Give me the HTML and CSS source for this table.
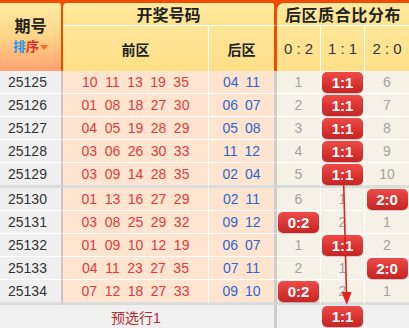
FILE: index.html
```html
<!DOCTYPE html>
<html lang="zh">
<head>
<meta charset="utf-8">
<link rel="stylesheet" href="styles.css">
</head>
<body>
<div class="board">
  <div class="grid">
    <div class="h-qh"><span class="t-qh">期号</span><span class="sort"><b class="s1">排</b><b class="s2">序</b><i class="tri"></i></span></div>
    <div class="h-kj">开奖号码</div>
    <div class="h-right">后区质合比分布</div>
    <div class="h-front">前区</div>
    <div class="h-back">后区</div>
    <div class="h-c">0 : 2</div>
    <div class="h-c">1 : 1</div>
    <div class="h-c last">2 : 0</div>

    <div class="qh">25125</div><div class="front"><span>10</span><span>11</span><span>13</span><span>19</span><span>35</span></div><div class="back"><span>04</span><span>11</span></div><div class="c">1</div><div class="c"><span class="badge">1:1</span></div><div class="c last">6</div>
    <div class="qh">25126</div><div class="front"><span>01</span><span>08</span><span>18</span><span>27</span><span>30</span></div><div class="back"><span>06</span><span>07</span></div><div class="c">2</div><div class="c"><span class="badge">1:1</span></div><div class="c last">7</div>
    <div class="qh">25127</div><div class="front"><span>04</span><span>05</span><span>19</span><span>28</span><span>29</span></div><div class="back"><span>05</span><span>08</span></div><div class="c">3</div><div class="c"><span class="badge">1:1</span></div><div class="c last">8</div>
    <div class="qh">25128</div><div class="front"><span>03</span><span>06</span><span>26</span><span>30</span><span>33</span></div><div class="back"><span>11</span><span>12</span></div><div class="c">4</div><div class="c"><span class="badge">1:1</span></div><div class="c last">9</div>
    <div class="qh g">25129</div><div class="front g"><span>03</span><span>09</span><span>14</span><span>28</span><span>35</span></div><div class="back g"><span>02</span><span>04</span></div><div class="c g">5</div><div class="c g"><span class="badge">1:1</span></div><div class="c last g">10</div>

    <div class="qh">25130</div><div class="front"><span>01</span><span>13</span><span>16</span><span>27</span><span>29</span></div><div class="back"><span>02</span><span>11</span></div><div class="c">6</div><div class="c">1</div><div class="c last"><span class="badge">2:0</span></div>
    <div class="qh">25131</div><div class="front"><span>03</span><span>08</span><span>25</span><span>29</span><span>32</span></div><div class="back"><span>09</span><span>12</span></div><div class="c"><span class="badge">0:2</span></div><div class="c">2</div><div class="c last">1</div>
    <div class="qh">25132</div><div class="front"><span>01</span><span>09</span><span>10</span><span>12</span><span>19</span></div><div class="back"><span>06</span><span>07</span></div><div class="c">1</div><div class="c"><span class="badge">1:1</span></div><div class="c last">2</div>
    <div class="qh">25133</div><div class="front"><span>04</span><span>11</span><span>23</span><span>27</span><span>35</span></div><div class="back"><span>07</span><span>11</span></div><div class="c">2</div><div class="c">1</div><div class="c last"><span class="badge">2:0</span></div>
    <div class="qh g">25134</div><div class="front g"><span>07</span><span>12</span><span>18</span><span>27</span><span>33</span></div><div class="back g"><span>09</span><span>10</span></div><div class="c g"><span class="badge">0:2</span></div><div class="c g">2</div><div class="c last g">1</div>

    <div class="f-qh"></div><div class="f-front">预选行1</div><div class="f-back"></div><div class="f-c"></div><div class="f-c"><span class="badge">1:1</span></div><div class="f-c last"></div>
  </div>
  <svg class="arrow" width="409" height="328" viewBox="0 0 409 328">
    <line x1="343.5" y1="176" x2="346.5" y2="294" stroke="#e3201d" stroke-width="1.6"/>
    <polygon points="341.5,292 351.5,292 346.8,305" fill="#e3201d"/>
  </svg>
</div>
</body>
</html>
```

FILE: styles.css
```css
html, body {
  margin: 0;
  padding: 0;
  background: #ffffff;
}
body {
  font-family: "Liberation Sans", Arial, "Noto Sans CJK SC", sans-serif;
}
.board {
  position: relative;
  width: 409px;
  height: 328px;
  overflow: hidden;
  background: #f04c00;
  padding-top: 3px;
  box-sizing: border-box;
}
.grid {
  display: grid;
  grid-template-columns: 63px 146px 68px 44px 44px 44px;
  grid-template-rows: 23px 45px;
  grid-auto-rows: auto;
}
.grid > div {
  box-sizing: border-box;
  display: flex;
  align-items: center;
  justify-content: center;
}
/* header */
.h-qh {
  grid-row: 1 / 3;
  flex-direction: column;
  justify-content: flex-start !important;
  background: linear-gradient(#ffeaa2, #ffd88a 45%, #ffa272);
  border-right: 2px solid #f04c00;
  border-radius: 0 4px 0 0;
  padding-top: 14px;
}
.t-qh {
  font-size: 16px;
  font-weight: bold;
  color: #222;
  line-height: 20px;
  height: 20px;
}
.sort {
  display: flex;
  align-items: center;
  font-size: 13px;
  line-height: 20px;
  height: 20px;
}
.s1 { color: #2f95ec; }
.s2 { color: #d8322d; }
.tri {
  width: 0;
  height: 0;
  border-left: 4px solid transparent;
  border-right: 4px solid transparent;
  border-top: 5px solid #ff6a1a;
  margin-left: 1px;
}
.h-kj, .h-right {
  font-size: 16px;
  font-weight: bold;
  color: #222;
  background: linear-gradient(#ffeba4, #ffe28c);
  border-bottom: 1px solid #ffffff;
}
.h-kj {
  grid-column: 2 / 4;
  border-right: 3px solid #f04c00;
  border-radius: 4px 4px 0 0;
}
.h-right {
  grid-column: 4 / 7;
  border-radius: 7px 0 0 0;
  letter-spacing: 0.6px;
}
.h-front, .h-back, .h-c {
  background: linear-gradient(#ffe69a, #ffdf88);
  font-size: 14px;
  font-weight: bold;
  color: #222;
}
.h-front { border-right: 1px solid #ffffff; }
.h-back { border-right: 3px solid #f04c00; }
.h-c {
  font-weight: normal;
  font-size: 15px;
  color: #333;
  border-right: 1px solid #ffffff;
}
.h-c.last, .c.last, .f-c.last { border-right: 0; }
/* body */
.qh, .front, .back, .c {
  height: 23px;
  border-bottom: 1px solid #ffffff;
  font-size: 14px;
}
.qh {
  background: #efefef;
  color: #333;
  border-right: 2px solid #c6c6c6;
  justify-content: flex-start !important;
  padding-left: 8px;
}
.front {
  background: #ffe5cf;
  color: #e2393b;
  border-right: 1px solid #ffffff;
  gap: 7.5px;
}
.back {
  background: #ffe5cf;
  color: #3164cf;
  border-right: 3px solid #cdcdcd;
  gap: 7px;
}
.c {
  background: #f6f1e6;
  color: #a2a2a2;
  border-right: 1px solid #ffffff;
}
.g {
  height: 25px;
  border-bottom: 3px solid #dcdcdc;
}
.badge {
  display: flex;
  align-items: center;
  justify-content: center;
  width: 41px;
  height: 21px;
  border-radius: 5px;
  background: linear-gradient(#ee4a48, #d73432 55%, #c42624);
  color: #ffffff;
  font-weight: bold;
  font-size: 15px;
  box-shadow: 0 1px 1px rgba(120, 0, 0, 0.25);
}
/* footer */
.f-qh, .f-front, .f-back, .f-c {
  height: 23px;
  background: #f0f0f0;
}
.f-front {
  color: #b52c2c;
  font-size: 14px;
}
.f-back { border-right: 3px solid #cdcdcd; }
.f-c { border-right: 1px solid #f8f8f8; }
.arrow {
  position: absolute;
  left: 0;
  top: 0;
  pointer-events: none;
}
```
